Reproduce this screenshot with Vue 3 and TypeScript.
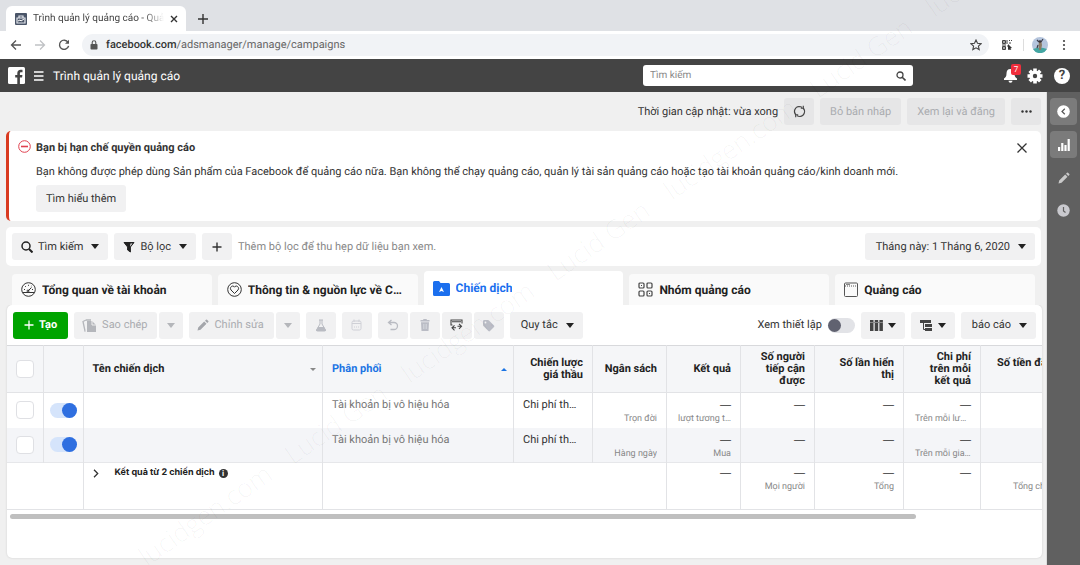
<script setup lang="ts">
import { ref } from 'vue'

interface Cell { value?: string; note?: string }
interface Campaign { id: number; on: boolean; strategy: string; cells: Cell[] }

const dash = '—'
const query = ref('')
const preview = ref(false)

const tabs = [
  { id: 'overview', label: 'Tổng quan về tài khoản' },
  { id: 'resources', label: 'Thông tin & nguồn lực về Chiến dịch' },
  { id: 'campaigns', label: 'Chiến dịch' },
  { id: 'adsets', label: 'Nhóm quảng cáo' },
  { id: 'ads', label: 'Quảng cáo' },
]
const activeTab = ref('campaigns')

const metricHeads = ['Ngân sách', 'Kết quả', 'Số người\ntiếp cận\nđược', 'Số lần hiển\nthị', 'Chi phí\ntrên mỗi\nkết quả']

const campaigns = ref<Campaign[]>([
  {
    id: 1, on: true, strategy: 'Chi phí thấp nhất',
    cells: [{ note: 'Trọn đời' }, { value: dash, note: 'lượt tương tác' }, { value: dash }, { value: dash }, { value: dash, note: 'Trên mỗi lượt tương tác' }],
  },
  {
    id: 2, on: true, strategy: 'Chi phí thấp nhất',
    cells: [{ note: 'Hàng ngày' }, { value: dash, note: 'Mua' }, { value: dash }, { value: dash }, { value: dash, note: 'Trên mỗi giao dịch' }],
  },
])
const totals: Cell[] = [{ value: dash }, { value: dash, note: 'Mọi người' }, { value: dash, note: 'Tổng' }, { value: dash }]
</script>

<template>
  <div class="window">
    <div class="tabstrip">
      <div class="browser-tab">
        <svg class="favicon" viewBox="0 0 12 12" aria-hidden="true"><rect width="12" height="12" rx="1" fill="#4a5568" /><path d="M2 5h8v5H2zM4 5V3h4v2" fill="none" stroke="#e4e8ee" stroke-width="1.2" /><path d="M3 8l2-1 1 1 3-2" fill="none" stroke="#fff" /></svg>
        <span class="browser-title">Trình quản lý quảng cáo - Quản lý</span>
        <button class="plain" aria-label="Đóng thẻ"><svg width="8" height="8" viewBox="0 0 8 8"><path d="M1 1l6 6M7 1L1 7" stroke="#333" stroke-width="1.4" /></svg></button>
      </div>
      <button class="plain new-tab" aria-label="Thẻ mới"><svg width="10" height="10" viewBox="0 0 10 10"><path d="M5 0v10M0 5h10" stroke="#333" stroke-width="1.4" /></svg></button>
    </div>

    <div class="addressbar">
      <button class="plain" aria-label="Quay lại"><svg width="12" height="12" viewBox="0 0 12 12" fill="none" stroke="#555" stroke-width="1.3"><path d="M11 6H1.500M6 1.500L1.500 6 6 10.500" /></svg></button>
      <button class="plain" aria-label="Tiếp"><svg width="12" height="12" viewBox="0 0 12 12" fill="none" stroke="#c0c2c5" stroke-width="1.300"><path d="M1 6h9.500M6 1.500L10.500 6 6 10.500" /></svg></button>
      <button class="plain" aria-label="Tải lại"><svg width="12" height="12" viewBox="0 0 12 12"><path d="M10 3.300A4.600 4.600 0 1 0 10.600 6.800" fill="none" stroke="#555" stroke-width="1.400" /><path d="M11 .8v4H7z" fill="#555" /></svg></button>
      <div class="url">
        <svg width="8" height="10" viewBox="0 0 8 10" aria-hidden="true"><rect x=".5" y="4" width="7" height="5.500" rx=".8" fill="#555" /><path d="M2.200 4V2.600a1.800 1.800 0 0 1 3.600 0V4" fill="none" stroke="#555" stroke-width="1.100" /></svg>
        <span class="url-text"><b>facebook.com</b>/adsmanager/manage/campaigns</span>
        <button class="plain" aria-label="Đánh dấu trang"><svg width="12" height="12" viewBox="0 0 12 12"><path d="M6 1l1.500 3.300 3.600.4-2.700 2.400.8 3.500L6 8.800l-3.200 1.800.8-3.500L.9 4.700l3.600-.4z" fill="none" stroke="#444" stroke-width="1.100" /></svg></button>
      </div>
      <svg class="qr" width="10" height="10" viewBox="0 0 10 10" aria-hidden="true" fill="none" stroke="#444"><path d="M.5.5h3v3h-3zM.5 6.500h3v3h-3z" /><path d="M2 1v2M2 7v2M5 0v4M7 .5h1M9.500 0v1M7 3h2M0 5h4M5 6h1" /><path d="M6 4l4 4-1.500.2.800 1.500H6z" fill="#333" stroke="none" /></svg>
      <span class="rule"></span>
      <svg class="avatar" width="16" height="16" viewBox="0 0 16 16" aria-hidden="true"><circle cx="8" cy="8" r="8" fill="#b5c5dd" /><path d="M1 12q7-3 14 0A8 8 0 0 1 1 12z" fill="#43a6a2" /><path d="M7 5h2.500l.5 3-1 5H7l-.5-5z" fill="#8b7a65" /><path d="M5 3l2 2M11 2L9 5M6 8l-1 3" stroke="#3c3d4a" stroke-width="1.200" /><circle cx="8" cy="4.500" r="1.300" fill="#39363c" /></svg>
      <button class="plain" aria-label="Trình đơn"><svg width="4" height="12" viewBox="0 0 4 12" fill="#444"><circle cx="2" cy="2" r="1.100" /><circle cx="2" cy="6" r="1.100" /><circle cx="2" cy="10" r="1.100" /></svg></button>
    </div>

    <header class="topbar">
      <svg class="logo" width="17" height="17" viewBox="0 0 17 17" role="img" aria-label="Facebook"><rect width="17" height="17" rx="1.500" fill="#fff" /><path d="M9.300 17v-6.500H7.200V8h2.100V6.200c0-2.200 1.300-3.400 3.300-3.400.9 0 1.700.1 1.900.1v2.300h-1.300c-1 0-1.300.5-1.300 1.200V8h2.500l-.3 2.500h-2.200V17z" fill="#444" /></svg>
      <button class="plain burger" aria-label="Menu"><svg width="10" height="10" viewBox="0 0 10 10" stroke="#fff" stroke-width="1.300"><path d="M0 1h9.500M0 5h9.500M0 9h9.500" /></svg></button>
      <h1>Trình quản lý quảng cáo</h1>
      <label class="search">
        <input v-model="query" type="text" placeholder="Tìm kiếm" aria-label="Tìm kiếm" />
        <svg width="10" height="10" viewBox="0 0 10 10" fill="none" stroke="#444"><circle cx="4" cy="4" r="3" stroke-width="1.300" /><path d="M6.200 6.200L9.500 9.500" stroke-width="1.600" /></svg>
      </label>
      <button class="plain bell" aria-label="Thông báo">
        <svg width="15" height="15" viewBox="0 0 15 15" fill="#fff"><path d="M7.500 1c-3 0-4 2-4 4.500 0 3-1 4-2.500 5v1.500h13v-1.500c-1.500-1-2.500-2-2.500-5C11.500 3 10.500 1 7.500 1zM5.500 12.700h4a2 2 0 0 1-4 0z" /></svg>
        <span class="badge">7</span>
      </button>
      <button class="plain" aria-label="Cài đặt"><svg width="16" height="16" viewBox="0 0 16 16"><g stroke="#fff" stroke-width="3.600"><path d="M8 .5v15M.5 8h15M2.700 2.700l10.600 10.600M13.300 2.700L2.700 13.300" /></g><circle cx="8" cy="8" r="5.600" fill="#fff" /><circle cx="8" cy="8" r="2.200" fill="#444" /></svg></button>
      <button class="plain help" aria-label="Trợ giúp">?</button>
    </header>

    <div class="body">
      <main>
        <div class="status">
          <span>Thời gian cập nhật: vừa xong</span>
          <button class="btn square grey" aria-label="Làm mới"><svg width="13" height="13" viewBox="0 0 13 13" fill="none" stroke="#444" stroke-width="1.100"><path d="M2.900 10A5 5 0 0 1 6 1.500q1.800 0 3.200 1M10.100 3A5 5 0 0 1 7 11.500q-1.800 0-3.200-1" /><path d="M10.300.8V3.300H7.800M2.700 12.200V9.700h2.500" /></svg></button>
          <button class="btn grey roomy" disabled>Bỏ bản nháp</button>
          <button class="btn grey roomy" disabled>Xem lại và đăng</button>
          <button class="btn square grey" aria-label="Thêm"><svg width="11" height="3" viewBox="0 0 11 3" fill="#333"><circle cx="1.500" cy="1.500" r="1.200" /><circle cx="5.500" cy="1.500" r="1.200" /><circle cx="9.500" cy="1.500" r="1.200" /></svg></button>
        </div>

        <section class="alert" role="alert">
          <svg class="stop" width="13" height="13" viewBox="0 0 13 13" fill="none" stroke="#e0404f"><circle cx="6.500" cy="6.500" r="5.800" stroke-width="1" /><path d="M3 6.500h7" stroke-width="1.600" /></svg>
          <div class="alert-text">
            <h2>Bạn bị hạn chế quyền quảng cáo</h2>
            <p>Bạn không được phép dùng Sản phẩm của Facebook để quảng cáo nữa. Bạn không thể chạy quảng cáo, quản lý tài sản quảng cáo hoặc tạo tài khoản quảng cáo/kinh doanh mới.</p>
            <button class="btn roomy">Tìm hiểu thêm</button>
          </div>
          <button class="plain close" aria-label="Đóng"><svg width="10" height="10" viewBox="0 0 10 10" stroke="#333" stroke-width="1.300"><path d="M.5.5l9 9M9.500.5l-9 9" /></svg></button>
        </section>

        <section class="filters">
          <button class="btn"><svg width="12" height="12" viewBox="0 0 12 12" fill="none" stroke="#222"><circle cx="5" cy="5" r="4" stroke-width="1.500" /><path d="M8 8l3.500 3.500" stroke-width="2" /></svg>Tìm kiếm<i class="caret"></i></button>
          <button class="btn"><svg width="12" height="12" viewBox="0 0 12 12"><path d="M1 1.500h10L7.400 6v5L4.600 9V6z" fill="#222" stroke="#222" stroke-linejoin="round" /><path d="M7.500 2.500h2L7 5.500z" fill="#f1f1f2" /></svg>Bộ lọc<i class="caret"></i></button>
          <button class="btn square" aria-label="Thêm bộ lọc"><svg width="10" height="10" viewBox="0 0 10 10" stroke="#333" stroke-width="1.400"><path d="M5 .5v9M.5 5h9" /></svg></button>
          <span class="hint">Thêm bộ lọc để thu hẹp dữ liệu bạn xem.</span>
          <button class="btn menu">Tháng này: 1 Tháng 6, 2020<i class="caret"></i></button>
        </section>

        <nav class="tabs" role="tablist">
          <button v-for="t in tabs" :key="t.id" role="tab" class="tab" :class="{ active: t.id === activeTab }" :aria-selected="t.id === activeTab" @click="activeTab = t.id">
            <svg v-if="t.id === 'overview'" width="15" height="15" viewBox="0 0 15 15" fill="none" stroke="#333"><circle cx="7.500" cy="7.500" r="6.800" /><path d="M2 10.500h11M7 9l3.500-3.500" /><path d="M3 7.500h1M4.200 4.200l.8.8M7.500 2.800v1M12 7.500h-1M10.500 4l-.6.600" /><circle cx="7" cy="9" r="1" /></svg>
            <svg v-else-if="t.id === 'resources'" width="15" height="15" viewBox="0 0 15 15" fill="none" stroke="#333"><circle cx="7.500" cy="7.500" r="6.800" /><path d="M7.500 11.500L4 8C2.600 6.400 4 4 5.700 4c1 0 1.500.6 1.800 1.200C7.800 4.600 8.300 4 9.300 4 11 4 12.400 6.400 11 8z" /></svg>
            <svg v-else-if="t.id === 'campaigns'" width="17" height="15" viewBox="0 0 17 15"><path d="M1.500 0H6l1.500 2H15.500A1.500 1.500 0 0 1 17 3.500v10A1.500 1.500 0 0 1 15.500 15h-14A1.500 1.500 0 0 1 0 13.500v-12A1.500 1.500 0 0 1 1.500 0z" fill="#1b6fee" /><path d="M8.500 6l2.500 5-2.500-1L6 11z" fill="#fff" /></svg>
            <svg v-else-if="t.id === 'adsets'" width="15" height="15" viewBox="0 0 15 15" fill="none" stroke="#444" stroke-width="1.200"><rect x="1" y="1" width="5" height="5" rx="1" /><rect x="9" y="1" width="5" height="5" rx="1" /><rect x="1" y="9" width="5" height="5" rx="1" /><rect x="9" y="9" width="5" height="5" rx="1" /><path d="M3 3.500h1M11 11.500h1" /></svg>
            <svg v-else width="14" height="15" viewBox="0 0 14 15" fill="none" stroke="#555"><rect x=".5" y="1" width="13" height="13.500" rx="1" /><path d="M1 4h12" stroke-dasharray="1 1" /><path d="M2 2.500h4" stroke="#888" /></svg>
            <span>{{ t.label }}</span>
          </button>
        </nav>

        <section class="card">
          <div class="tools">
            <button class="btn create"><svg width="10" height="10" viewBox="0 0 10 10" stroke="#fff" stroke-width="1.300"><path d="M5 .5v9M.5 5h9" /></svg>Tạo</button>
            <div class="group">
              <button class="btn action" disabled><svg width="15" height="13" viewBox="0 0 15 13"><path d="M5 2h5l4 4v7H5z" fill="#b4b6bb" /><path d="M10 2v4h4" fill="none" stroke="#eee" /><path d="M3.500 12H3L1 2.500 4 1M4 1h5" fill="none" stroke="#b4b6bb" stroke-width="1.300" /></svg>Sao chép</button>
              <button class="btn drop" disabled aria-label="Tùy chọn sao chép"><i class="caret"></i></button>
            </div>
            <div class="group">
              <button class="btn action" disabled><svg width="12" height="12" viewBox="0 0 12 12" fill="#a4a6ab"><path d="M.5 11.500l.7-3 6-6 2.300 2.300-6 6zM8 1.700L9 .7q.5-.5 1 0L11.300 2q.5.500 0 1l-1 1z" /></svg>Chỉnh sửa</button>
              <button class="btn drop" disabled aria-label="Tùy chọn chỉnh sửa"><i class="caret"></i></button>
            </div>
            <button class="btn square" disabled aria-label="Thử nghiệm"><svg width="12" height="13" viewBox="0 0 12 13" fill="none" stroke="#b9bbc2"><path d="M4 1h4M5 1v4L1.500 11q-.3 1 1 1h7q1.300 0 1-1L7 5V1" /><path d="M3 8.500h6l1.500 3H1.500z" fill="#b9bbc2" /></svg></button>
            <button class="btn square" disabled aria-label="Lịch"><svg width="11" height="12" viewBox="0 0 11 12" fill="none" stroke="#cfd0d6"><rect x="1" y="2" width="9" height="9" rx="1.500" /><path d="M1 4.500h9M3 .5V3M8 .5V3M3 8h1M5 8h1M7 8h1" /></svg></button>
            <div class="group">
              <button class="btn square" disabled aria-label="Hoàn tác"><svg width="12" height="12" viewBox="0 0 12 12" fill="none" stroke="#b9bbc2" stroke-width="1.300"><path d="M4.500 1L1.500 3.500l3 2.500M1.500 3.500H7a3.500 3.500 0 0 1 0 7H3.500" /></svg></button>
              <button class="btn square" disabled aria-label="Xóa"><svg width="10" height="12" viewBox="0 0 10 12" fill="#babcc5"><path d="M3.500 0h3l.5 1h2.500v1.500h-9V1H3zM1 3.300h8L8.500 12h-7z" /><path d="M3.500 5v5M5 5v5M6.500 5v5" stroke="#dcdde2" stroke-width=".6" /></svg></button>
              <button class="btn square" aria-label="Xuất và nhập"><svg width="13" height="12" viewBox="0 0 13 12" fill="none" stroke="#444" stroke-width="1.100"><path d="M2.500 6H1V1h11v3.500M2 2.800h9" /><path d="M4.500 6.300L2 8.800l2.500 2.500M2 8.800h4M9 4.800l2.500 2.500L9 9.800M11.500 7.300H7.500" /></svg></button>
              <button class="btn square" disabled aria-label="Gắn thẻ"><svg width="13" height="13" viewBox="0 0 13 13" fill="#babcc5"><path d="M1 2.200Q1 1 2.200 1H6q.6 0 1 .4l5 5q.8.800 0 1.600L8 12q-.8.800-1.600 0l-5-5Q1 6.600 1 6z" /><circle cx="3.500" cy="3.500" r=".9" fill="#f1f1f2" /></svg></button>
            </div>
            <button class="btn menu">Quy tắc<i class="caret"></i></button>
            <label class="preview">Xem thiết lập<input v-model="preview" class="switch" type="checkbox" role="switch" /></label>
            <button class="btn icon-menu" aria-label="Cột"><svg width="13" height="11" viewBox="0 0 13 11" fill="#444"><path d="M0 0h3.500v11H0zM4.700 0h3.500v11H4.700zM9.400 0h3.500v11H9.400z" /><path d="M0 2.500h13" stroke="#888" /></svg><i class="caret"></i></button>
            <button class="btn icon-menu" aria-label="Phân tích"><svg width="13" height="11" viewBox="0 0 13 11" fill="#444"><path d="M0 0h11v3H0zM5 4h7v3H5zM5 8h7v3H5z" /><path d="M3.500 3v6.500H5" fill="none" stroke="#444" /></svg><i class="caret"></i></button>
            <button class="btn menu">báo cáo<i class="caret"></i></button>
          </div>

          <div class="table-wrap">
            <table>
              <colgroup>
                <col class="c-check" /><col class="c-switch" /><col /><col class="c-delivery" /><col class="c-strategy" />
                <col class="c-num" /><col class="c-num" /><col class="c-num" /><col class="c-impr" /><col class="c-cost" /><col class="c-spent" />
              </colgroup>
              <thead>
                <tr>
                  <th><input class="box" type="checkbox" aria-label="Chọn tất cả" /></th>
                  <th></th>
                  <th class="left"><span class="sort">Tên chiến dịch<i class="caret tiny"></i></span></th>
                  <th class="left blue"><span class="sort">Phân phối<i class="caret tiny up"></i></span></th>
                  <th>Chiến lược giá thầu</th>
                  <th v-for="h in metricHeads" :key="h">{{ h }}</th>
                  <th class="spent">Số tiền đã<br />&nbsp;</th>
                </tr>
              </thead>
              <tbody>
                <tr v-for="c in campaigns" :key="c.id">
                  <td class="mid"><input class="box" type="checkbox" :aria-label="`Chọn chiến dịch ${c.id}`" /></td>
                  <td class="mid"><input v-model="c.on" class="switch" type="checkbox" role="switch" :aria-label="`Bật chiến dịch ${c.id}`" /></td>
                  <td></td>
                  <td class="left soft">Tài khoản bị vô hiệu hóa</td>
                  <td class="left clip">{{ c.strategy }}</td>
                  <td v-for="(x, i) in c.cells" :key="i"><div class="value">{{ x.value }}</div><div class="note">{{ x.note }}</div></td>
                  <td></td>
                </tr>
              </tbody>
              <tfoot>
                <tr>
                  <td colspan="2"></td>
                  <td class="summary"><div class="summary-line"><button class="plain" aria-label="Mở rộng"><svg width="6" height="9" viewBox="0 0 6 9" fill="none" stroke="#333" stroke-width="1.300"><path d="M1 .8l3.700 3.700L1 8.200" /></svg></button><b>Kết quả từ 2 chiến dịch</b><span class="info">i</span></div></td>
                  <td colspan="3"></td>
                  <td v-for="(x, i) in totals" :key="i"><div class="value">{{ x.value }}</div><div class="note">{{ x.note }}</div></td>
                  <td class="spent"><div class="value">&nbsp;</div><div class="note">Tổng chi tiêu</div></td>
                </tr>
              </tfoot>
            </table>
          </div>
          <div class="scroll"><div class="thumb"></div></div>
        </section>
      </main>

      <aside class="rail">
        <button class="rail-btn lit" aria-label="Thu gọn"><svg width="13" height="13" viewBox="0 0 13 13"><circle cx="6.500" cy="6.500" r="6.300" fill="#fff" /><path d="M7.800 3.800L5 6.500l2.800 2.700" fill="none" stroke="#555" stroke-width="1.200" /></svg></button>
        <button class="rail-btn lit" aria-label="Biểu đồ"><svg width="12" height="12" viewBox="0 0 12 12" fill="#fff"><path d="M0 8h2.200v4H0zM3.200 4h2.200v8H3.200zM6.400 6h2.200v6H6.400zM9.600 0h2.200v12H9.600z" /></svg></button>
        <button class="rail-btn" aria-label="Chỉnh sửa"><svg width="12" height="12" viewBox="0 0 12 12" fill="#c9c9c9"><path d="M.5 11.500l.7-3 6-6 2.300 2.300-6 6zM8 1.700L9 .7q.5-.5 1 0L11.300 2q.5.500 0 1l-1 1z" /></svg></button>
        <button class="rail-btn" aria-label="Lịch sử"><svg width="13" height="13" viewBox="0 0 13 13"><circle cx="6.500" cy="6.500" r="6.200" fill="#c9c9ce" /><path d="M6.500 3v4L8.500 8.500" fill="none" stroke="#606060" stroke-width="1.200" /></svg></button>
      </aside>
    </div>

    <svg class="watermark" width="1080" height="565" viewBox="0 0 1080 565" aria-hidden="true">
      <g transform="translate(147 567) rotate(-34.900)">
        <text x="0">lucidgen.com</text><text x="178">Lucid Gen</text>
        <text x="320">lucidgen.com</text><text x="498">Lucid Gen</text>
        <text x="640">lucidgen.com</text><text x="818">Lucid Gen</text>
        <text x="960">lucidgen.com</text>
      </g>
    </svg>
  </div>
</template>

<style>
body { margin: 0; }
</style>

<style scoped>
* { box-sizing: border-box; }
.window { position: relative; display: flex; flex-direction: column; min-height: 100vh; overflow: hidden; background: #f0f0f0; color: #333; font: 11px/14px Roboto, "Liberation Sans", sans-serif; text-rendering: geometricPrecision; }
button, input { font: inherit; color: inherit; text-rendering: inherit; }
svg { flex: none; }
.plain { display: flex; align-items: center; justify-content: center; padding: 0; border: 0; background: none; }

.tabstrip { display: flex; align-items: flex-end; height: 31px; background: #dfe1e5; }
.browser-tab { display: flex; align-items: center; gap: 6px; width: 180px; height: 25px; margin-left: 6px; padding: 0 8px 0 9px; border-radius: 6px 6px 0 0; background: #fff; font-size: 10px; }
.favicon { width: 12px; height: 12px; }
.browser-title { flex: 1; overflow: hidden; white-space: nowrap; color: #444; mask-image: linear-gradient(90deg, #000 85%, transparent); }
.new-tab { height: 25px; margin-left: 12px; }

.addressbar { display: flex; align-items: center; height: 28px; padding: 0 14px 0 10px; background: #fff; }
.addressbar > .plain { width: 12px; margin-right: 12px; }
.addressbar > .plain:last-child { width: 4px; margin: 0 0 0 14px; }
.url { display: flex; flex: 1; align-items: center; gap: 8px; height: 22px; padding: 0 7px 0 8px; border-radius: 11px; background: #f1f3f6; }
.url-text { flex: 1; color: #666; }
.url-text b { color: #333; font-weight: 500; }
.qr { margin-left: 13px; }
.rule { width: 1px; height: 12px; margin: 0 8px 0 11px; background: #ddd; }

.topbar { display: flex; align-items: center; height: 33px; padding: 0 10px 0 8px; background: #444; color: #fff; }
.burger { margin: 0 9px; }
h1 { flex: 1; margin: 0; font-size: 12px; font-weight: 400; line-height: 16px; }
.search { display: flex; align-items: center; width: 25vw; height: 21px; margin-right: 90px; padding: 0 7px; border-radius: 3px; background: #fff; }
.search input { flex: 1; min-width: 0; padding: 0; border: 0; outline: 0; background: none; color: #333; font-size: 10px; }
.search input::placeholder { color: #888; opacity: 1; }
.bell { position: relative; margin-right: 9px; }
.badge { position: absolute; top: -4px; right: -3px; width: 10px; height: 11px; border-radius: 2px; background: #f02e3c; font-size: 8px; line-height: 11px; text-align: center; }
.help { width: 16px; height: 16px; margin-left: 11px; border-radius: 50%; background: #fff; color: #444; font-size: 13px; font-weight: 700; }

.body { display: flex; flex: 1; }
main { display: flex; flex: 1; flex-direction: column; min-width: 0; padding: 6px 5px 7px 6px; border-right: 1px solid #ddd; }
.btn { display: flex; align-items: center; justify-content: center; gap: 5px; height: 27px; padding: 0 9px; border: 0; border-radius: 3px; background: #f1f1f2; white-space: nowrap; }
.btn:disabled { color: #aaacb0; }
.roomy { padding: 0 10px; }
.square { width: 30px; padding: 0; }
.grey { background: #e6e6e7; }
.caret { width: 0; height: 0; border: 4px solid transparent; border-top: 5px solid #222; border-bottom: 0; }
.btn .caret { margin-left: 3px; }
.btn:disabled .caret { margin: 0; border-top-color: #b4b6ba; }
.caret.tiny { border-width: 3px 3px 0; border-top-color: #888; }
.caret.tiny.up { border-width: 0 3px 3px; border-bottom: 3px solid #1b74e4; }

.status { display: flex; align-items: center; justify-content: flex-end; gap: 6px; margin-bottom: 6px; }

.alert { display: flex; height: 90px; padding: 9px 14px 0 9px; border-left: 3px solid #d93a20; border-radius: 5px; background: #fff; }
.alert-text { flex: 1; margin-left: 5px; padding-top: 1px; }
h2 { margin: 0 0 10px; font-size: 11px; font-weight: 700; line-height: 14px; }
p { margin: 0 0 6px; }
.close { align-self: flex-start; margin-top: 3px; }

.filters { display: flex; align-items: center; gap: 6px; height: 39px; margin: 6px 0 5px; padding: 0 6px; border-radius: 5px; background: #fff; }
.hint { flex: 1; color: #888; }

.tabs { display: grid; grid-template-columns: repeat(5, minmax(0, 1fr)); gap: 6px; align-items: end; padding: 0 6px; }
.tab { display: flex; align-items: center; gap: 6px; height: 31px; padding: 0 12px 0 9px; border: 0; border-radius: 4px 4px 0 0; background: #fafafa; color: #222; font-size: 12px; font-weight: 700; }
.tab span { overflow: hidden; text-overflow: ellipsis; white-space: nowrap; }
.tab.active { height: 34px; background: #fff; color: #1b6fee; }

.card { flex: 1; margin: 0 -1px 0 1px; overflow: hidden; border-radius: 5px; background: #fff; box-shadow: 0 0 2px #c8c8c8; clip-path: inset(0 -3px -3px); }
.tools { display: flex; align-items: center; gap: 6px; height: 40px; padding: 0 6px; }
.create { padding: 0 11px; background: #00a400; color: #fff; font-weight: 700; }
.action { padding: 0 10px 0 8px; }
.group { display: flex; gap: 2px; }
.drop { width: 24px; padding: 0; }
.menu { padding: 0 9px 0 11px; }
.icon-menu .caret { margin: 0; }
.preview { display: flex; align-items: center; gap: 6px; margin-left: auto; }

.switch { appearance: none; position: relative; width: 27px; height: 15px; margin: 0; border-radius: 8px; background: #e2e3e7; }
.switch::before { content: ""; position: absolute; top: 1px; left: 0; width: 13px; height: 13px; border-radius: 50%; background: #606270; }
.switch:checked { background: #d5e4fb; }
.switch:checked::before { top: 0; left: 12px; width: 15px; height: 15px; background: #2f6fe0; }
.box { display: block; appearance: none; width: 18px; height: 18px; margin: 0 auto; border: 1px solid #dfe0e4; border-radius: 4px; background: #fff; }

.table-wrap { overflow: hidden; }
table { width: calc(100% + 40px); table-layout: fixed; border-collapse: collapse; }
.c-check { width: 36px; }
.c-switch { width: 40px; }
.c-delivery { width: 191px; }
.c-strategy { width: 79px; }
.c-num { width: 74px; }
.c-impr { width: 89px; }
.c-cost { width: 77px; }
.c-spent { width: 101px; }
th, td { padding: 0 9px; border: 1px solid #e2e3e6; text-align: right; vertical-align: top; }
th { height: 47px; border-top-color: #d8d9dc; background: #f5f6f8; color: #222; font-size: 11px; font-weight: 700; line-height: 12px; vertical-align: middle; white-space: pre-line; }
th:first-child, td:first-child { border-left: 0; padding: 0; }
th.left, td.left { text-align: left; }
th.blue { color: #1b74e4; }
.sort { display: flex; align-items: center; justify-content: space-between; margin-right: -3px; }
tbody td { height: 35px; padding-top: 5px; border-top: 0; border-bottom: 0; }
tbody tr:nth-child(even) td { background: #f4f5f8; }
td.mid { padding: 0; text-align: center; vertical-align: middle; }
.mid .switch { display: block; margin: 0 auto; }
.soft { color: #777; }
.clip, .note { overflow: hidden; text-overflow: ellipsis; white-space: nowrap; }
td.clip { padding-right: 13px; }
.value { height: 14px; font-family: Inter, sans-serif; }
.note { padding-left: 2px; color: #888; font-size: 9px; line-height: 14px; }
tfoot td { height: 47px; padding-top: 3px; border-top-color: #e6e7ea; }
.summary-line { display: flex; align-items: center; font-size: 9px; font-family: Inter, sans-serif; color: #222; }
.summary-line b { margin: 0 4px 0 16px; }
.info { width: 9px; height: 9px; border-radius: 50%; background: #333; color: #fff; font: 700 8px/9px Roboto, sans-serif; text-align: center; }
th.spent, td.spent { text-align: left; padding-left: 16px; white-space: nowrap; }
td.spent { padding-left: 30px; }
.scroll { padding: 4px 3px; }
.thumb { width: 88%; height: 5px; border-radius: 3px; background: #bfbfbf; }

.rail { display: flex; flex-direction: column; align-items: center; gap: 6px; width: 33px; padding-top: 6px; background: #606060; }
.rail-btn { display: flex; align-items: center; justify-content: center; width: 27px; height: 27px; padding: 0; border: 0; border-radius: 4px; background: none; }
.rail-btn.lit { background: #7b7b7b; }

.watermark { position: absolute; top: 0; left: 0; pointer-events: none; fill: #000; fill-opacity: .04; font: 300 26px "Open Sans", sans-serif; }
</style>
